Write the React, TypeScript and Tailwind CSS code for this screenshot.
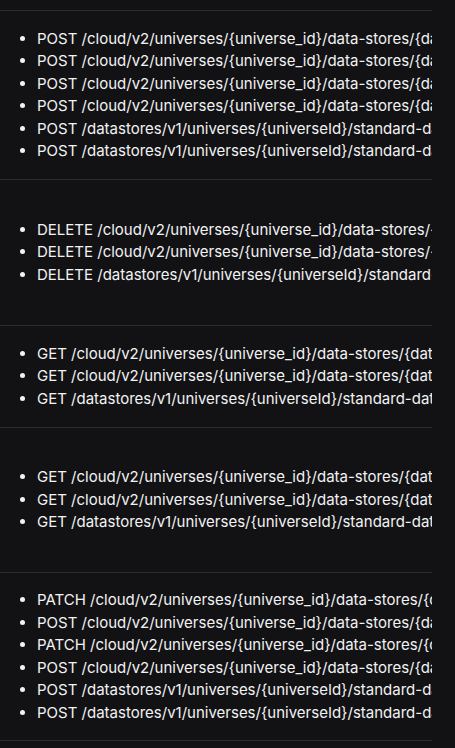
const groups: { h: string; items: string[] }[] = [
  {
    h: 'h-[169px]',
    items: [
      'POST /cloud/v2/universes/{universe_id}/data-stores/{data_store_id}/entries',
      'POST /cloud/v2/universes/{universe_id}/data-stores/{data_store_id}/scopes/{data_store_scope_id}/entries',
      'POST /cloud/v2/universes/{universe_id}/data-stores/{data_store_id}/entries/{entry_id}:increment',
      'POST /cloud/v2/universes/{universe_id}/data-stores/{data_store_id}/scopes/{data_store_scope_id}/entries/{entry_id}:increment',
      'POST /datastores/v1/universes/{universeId}/standard-datastores/datastore/entries/entry',
      'POST /datastores/v1/universes/{universeId}/standard-datastores/datastore/entries/entry/increment',
    ],
  },
  {
    h: 'h-[146px]',
    items: [
      'DELETE /cloud/v2/universes/{universe_id}/data-stores/{data_store_id}/entries/{entry_id}',
      'DELETE /cloud/v2/universes/{universe_id}/data-stores/{data_store_id}/scopes/{data_store_scope_id}/entries/{entry_id}',
      'DELETE /datastores/v1/universes/{universeId}/standard-datastores/datastore/entries/entry',
    ],
  },
  {
    h: 'h-[102px]',
    items: [
      'GET /cloud/v2/universes/{universe_id}/data-stores/{data_store_id}/entries',
      'GET /cloud/v2/universes/{universe_id}/data-stores/{data_store_id}/scopes/{data_store_scope_id}/entries',
      'GET /datastores/v1/universes/{universeId}/standard-datastores/datastore/entries',
    ],
  },
  {
    h: 'h-[145px]',
    items: [
      'GET /cloud/v2/universes/{universe_id}/data-stores/{data_store_id}/entries/{entry_id}',
      'GET /cloud/v2/universes/{universe_id}/data-stores/{data_store_id}/scopes/{data_store_scope_id}/entries/{entry_id}',
      'GET /datastores/v1/universes/{universeId}/standard-datastores/datastore/entries/entry',
    ],
  },
  {
    h: 'h-[168px]',
    items: [
      'PATCH /cloud/v2/universes/{universe_id}/data-stores/{data_store_id}/entries/{entry_id}',
      'POST /cloud/v2/universes/{universe_id}/data-stores/{data_store_id}/entries/{entry_id}:increment',
      'PATCH /cloud/v2/universes/{universe_id}/data-stores/{data_store_id}/scopes/{data_store_scope_id}/entries/{entry_id}',
      'POST /cloud/v2/universes/{universe_id}/data-stores/{data_store_id}/scopes/{data_store_scope_id}/entries/{entry_id}:increment',
      'POST /datastores/v1/universes/{universeId}/standard-datastores/datastore/entries/entry',
      'POST /datastores/v1/universes/{universeId}/standard-datastores/datastore/entries/entry/increment',
    ],
  },
];

export default function App() {
  return (
    <div className="w-[455px] h-[748px] bg-[#121215] pt-[10px] overflow-hidden font-['Inter',sans-serif] text-[15px] leading-[22.5px] text-[#f2f2f3]">
      <div className="w-[432px] overflow-hidden border-b border-[#2c2c30]">
        {groups.map((g, i) => (
          <div key={i} className={`${g.h} border-t border-[#2c2c30] flex items-center`}>
            <ul className="list-disc pl-[37px] whitespace-nowrap">
              {g.items.map((item, j) => (
                <li key={j}>{item}</li>
              ))}
            </ul>
          </div>
        ))}
      </div>
    </div>
  );
}
